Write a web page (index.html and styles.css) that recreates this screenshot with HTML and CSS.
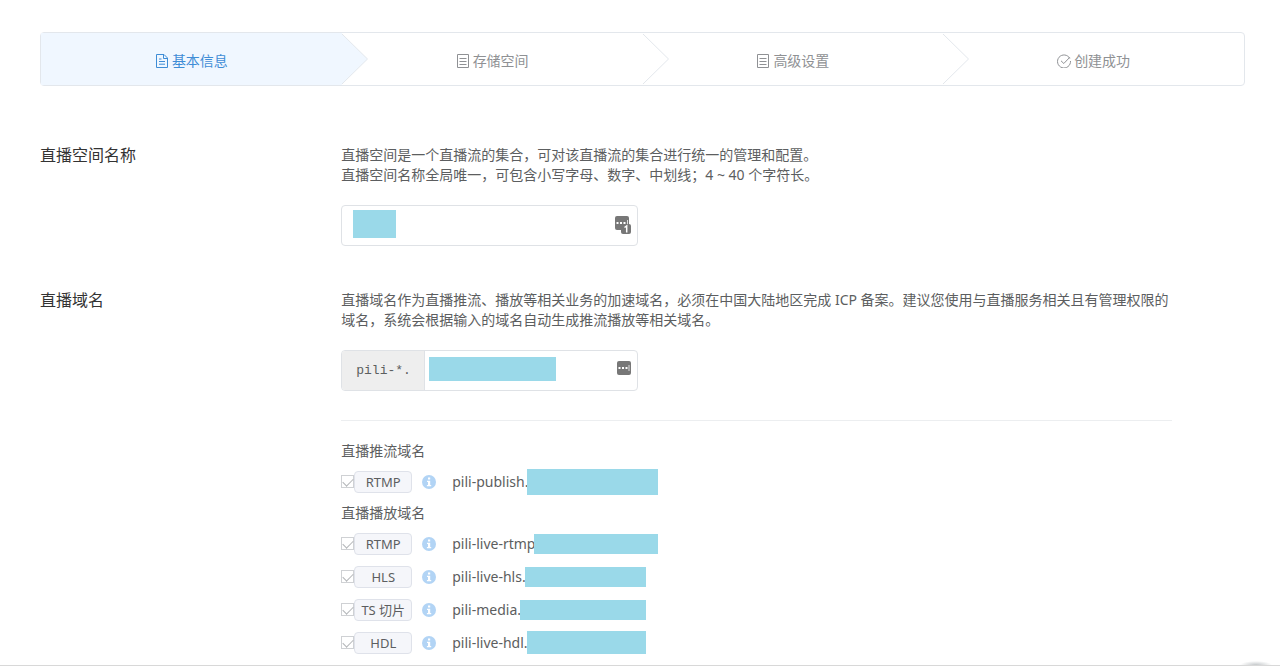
FILE: index.html
```html
<!DOCTYPE html>
<html lang="zh-CN">
<head>
<meta charset="utf-8">
<meta name="viewport" content="width=device-width, initial-scale=1">
<title>创建直播空间</title>
<link rel="stylesheet" href="styles.css">
</head>
<body>
<svg class="sprite" aria-hidden="true">
  <symbol id="i-list" viewBox="0 0 14 14"><path d="M1.500.5h11v13h-11zM3.500 4.500h7M3.500 7.500h7M3.500 10.500h7" fill="none" stroke="currentColor"/></symbol>
  <symbol id="i-info" viewBox="0 0 14 14"><circle cx="7" cy="7" r="7" fill="#b2d4f5"/><path d="M6 2.500h2.200v2H6zM5 5.700h3.200v4.300H9.200v1.300H4.900V10H6V7H5z" fill="#fff"/></symbol>
</svg>
<main class="page">
  <ol class="steps">
    <li class="step step-active">
      <svg class="step-icon" viewBox="0 0 14 14"><path d="M1.500.5h7.500l3.500 3.500v9.500h-11zM8.500.8v3.700h3.800M4 5h2.500M4 7.500h6M4 10.200h6" fill="none" stroke="currentColor"/></svg>
      <span>基本信息</span>
      <svg class="step-arrow" viewBox="0 0 28 52" preserveAspectRatio="none"><path d="M-1 0 25.500 26-1 52"/></svg>
    </li>
    <li class="step">
      <svg class="step-icon"><use href="#i-list"/></svg>
      <span>存储空间</span>
      <svg class="step-arrow" viewBox="0 0 28 52" preserveAspectRatio="none"><path d="M-1 0 25.500 26-1 52"/></svg>
    </li>
    <li class="step">
      <svg class="step-icon"><use href="#i-list"/></svg>
      <span>高级设置</span>
      <svg class="step-arrow" viewBox="0 0 28 52" preserveAspectRatio="none"><path d="M-1 0 25.500 26-1 52"/></svg>
    </li>
    <li class="step">
      <svg class="step-icon" viewBox="0 0 14 14"><path d="M12.800 4.500A6.500 6.500 0 1 0 13.500 7M4 6.800l2.800 2.700 6-6.200" fill="none" stroke="currentColor"/></svg>
      <span>创建成功</span>
    </li>
  </ol>

  <form class="form">
    <section class="field">
      <label class="field-title" for="hub-name">直播空间名称</label>
      <div class="field-body">
        <p class="hint">直播空间是一个直播流的集合，可对该直播流的集合进行统一的管理和配置。<br>直播空间名称全局唯一，可包含小写字母、数字、中划线；4 ~ 40 个字符长。</p>
        <div class="control">
          <input class="control-input" id="hub-name" type="text">
          <span class="mask mask-name"></span>
          <svg class="control-icon" viewBox="0 0 18 18"><rect x="1" width="14" height="14" rx="2" fill="#777"/><path d="M2.500 6h2v2h-2zM6 6h2v2H6zM9.500 6h2v2h-2z" fill="#fff"/><path d="M13.500 4v5" stroke="#ddd"/><rect x="7" y="8" width="10" height="10" rx="2" fill="#777"/><path d="M10.500 11.500 12.700 10v6.500" fill="none" stroke="#fff" stroke-width="1.500"/></svg>
        </div>
      </div>
    </section>

    <section class="field">
      <label class="field-title" for="hub-domain">直播域名</label>
      <div class="field-body">
        <p class="hint">直播域名作为直播推流、播放等相关业务的加速域名，必须在中国大陆地区完成 ICP 备案。建议您使用与直播服务相关且有管理权限的域名，系统会根据输入的域名自动生成推流播放等相关域名。</p>
        <div class="control">
          <span class="control-addon">pili-*.</span>
          <input class="control-input" id="hub-domain" type="text">
          <span class="mask mask-domain"></span>
          <svg class="control-icon" viewBox="0 0 18 18"><rect x="3" width="14" height="14" rx="2" fill="#777"/><path d="M4.500 6h2v2h-2zM8 6h2v2H8zM11.500 6h2v2h-2z" fill="#fff"/><path d="M15 4v6" stroke="#ddd"/></svg>
        </div>

        <div class="domains">
          <h3 class="domains-title">直播推流域名</h3>
          <div class="domain">
            <input class="check" type="checkbox" id="d1" checked disabled>
            <label class="tag" for="d1">RTMP</label>
            <svg class="info"><use href="#i-info"/></svg>
            <div class="address address-long"><span>pili-publish.</span><span class="bar bar-xl"></span></div>
          </div>
          <h3 class="domains-title">直播播放域名</h3>
          <div class="domain">
            <input class="check" type="checkbox" id="d2" checked disabled>
            <label class="tag" for="d2">RTMP</label>
            <svg class="info"><use href="#i-info"/></svg>
            <div class="address address-long"><span>pili-live-rtmp</span><span class="bar"></span></div>
          </div>
          <div class="domain">
            <input class="check" type="checkbox" id="d3" checked disabled>
            <label class="tag" for="d3">HLS</label>
            <svg class="info"><use href="#i-info"/></svg>
            <div class="address"><span>pili-live-hls.</span><span class="bar"></span></div>
          </div>
          <div class="domain">
            <input class="check" type="checkbox" id="d4" checked disabled>
            <label class="tag" for="d4">TS 切片</label>
            <svg class="info"><use href="#i-info"/></svg>
            <div class="address"><span>pili-media.</span><span class="bar"></span></div>
          </div>
          <div class="domain">
            <input class="check" type="checkbox" id="d5" checked disabled>
            <label class="tag" for="d5">HDL</label>
            <svg class="info"><use href="#i-info"/></svg>
            <div class="address"><span>pili-live-hdl.</span><span class="bar bar-l"></span></div>
          </div>
        </div>
      </div>
    </section>
  </form>
</main>
</body>
</html>
```

FILE: styles.css
```css
* {
  box-sizing: border-box;
}

body {
  margin: 0;
  background: #fff;
  color: #5c5e60;
  font: 14px/20px "Noto Sans", "Noto Sans CJK SC", sans-serif;
}

.sprite {
  position: absolute;
  width: 0;
  height: 0;
}

.page {
  padding: 32px 35px 6px 40px;
  border-bottom: 1px solid #d8d8d8;
  background: radial-gradient(ellipse 16px 4px at calc(100% - 24px) 100%, #c4c8ca, transparent);
}

.steps {
  display: grid;
  grid-template-columns: repeat(4, 1fr);
  margin: 0 0 59px;
  padding: 0;
  list-style: none;
  border: 1px solid #e3e7ec;
  border-radius: 4px;
}

.step {
  position: relative;
  display: flex;
  align-items: center;
  justify-content: center;
  gap: 3px;
  height: 52px;
  padding-top: 4px;
  color: #8f9194;
}

.step-active {
  background: #f0f7ff;
  color: #3f8dd6;
}

.step-icon {
  width: 14px;
  height: 14px;
}

.step-arrow {
  position: absolute;
  z-index: 1;
  top: 0;
  left: 100%;
  width: 28px;
  height: 100%;
  fill: #fff;
  stroke: #e3e7ec;
}

.step-active .step-arrow {
  fill: #f0f7ff;
}

.form {
  display: grid;
  gap: 44px;
}

.field {
  display: grid;
  grid-template-columns: 1fr 3fr;
}

.field-title {
  color: #333;
  font-size: 16px;
}

.field-body {
  padding-right: 73px;
}

.hint {
  margin: 0 0 20px;
}

.control {
  position: relative;
  display: flex;
  width: 297px;
  height: 41px;
  overflow: hidden;
  border: 1px solid #dfe2e6;
  border-radius: 4px;
}

.control-input {
  flex: 1;
  min-width: 0;
  padding: 0 36px 0 11px;
  border: 0;
  background: transparent;
  color: inherit;
  font: inherit;
}

.control-addon {
  display: flex;
  align-items: center;
  padding: 0 13px 0 14px;
  border-right: 1px solid #dfe2e6;
  background: #eee;
  font: 13px/20px "Liberation Mono", monospace;
}

.control-icon {
  position: absolute;
  top: 10px;
  right: 5px;
  width: 18px;
  height: 18px;
}

.mask,
.bar {
  background: #9ad9e9;
}

.mask {
  position: absolute;
}

.mask-name {
  top: 4px;
  left: 11px;
  width: 43px;
  height: 28px;
}

.mask-domain {
  top: 6px;
  left: 87px;
  width: 127px;
  height: 24px;
}

.domains {
  margin-top: 29px;
  padding-top: 15px;
  border-top: 1px solid #eceef0;
}

.domains-title {
  margin: 0;
  font-size: 14px;
  font-weight: 400;
  line-height: 29px;
}

.domain {
  display: flex;
  align-items: center;
  height: 33px;
}

.check {
  display: flex;
  align-items: flex-start;
  justify-content: center;
  width: 13px;
  height: 13px;
  margin: 0;
  padding-top: 2px;
  appearance: none;
  border: 1px solid #cfd1d4;
  background: #fff;
}

.check:checked::before {
  content: "";
  flex: none;
  width: 9px;
  height: 5px;
  border: solid #b4b6b9;
  border-width: 0 0 1px 1px;
  transform: rotate(-45deg);
}

.tag {
  width: 58px;
  height: 22px;
  border: 1px solid #dfe2ea;
  border-radius: 4px;
  background: #f5f6fa;
  font-size: 13px;
  text-align: center;
}

.info {
  width: 14px;
  height: 14px;
  margin: 0 16px 0 10px;
}

.address {
  display: flex;
  align-items: center;
  width: 194px;
}

.address-long {
  width: 206px;
}

.bar {
  flex: 1;
  height: 20px;
  margin-left: -1px;
}

.bar-l {
  height: 23px;
}

.bar-xl {
  height: 26px;
}
```
